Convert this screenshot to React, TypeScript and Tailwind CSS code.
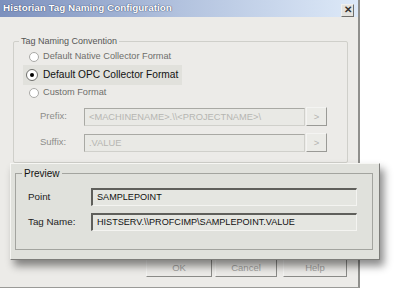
import React from 'react';

const font = { fontFamily: '"Liberation Sans", Arial, sans-serif' };

const Radio: React.FC<{ checked?: boolean; big?: boolean }> = ({ checked, big }) => (
  <span
    className={`inline-flex shrink-0 items-center justify-center rounded-full border bg-white ${
      big ? 'w-[12px] h-[12px] border-[#6f6f6c]' : 'w-[10px] h-[10px] border-[#a9a9a6]'
    }`}
  >
    {checked && <span className="w-[4px] h-[4px] rounded-full bg-black" />}
  </span>
);

const PathRow: React.FC<{ label: string; value: string }> = ({ label, value }) => (
  <div className="flex items-center">
    <span className="w-[44px] text-[9.5px] text-[#8d8d8a]">{label}</span>
    <div className="w-[221px] h-[18px] border border-[#d0d0cb] border-t-[#a9a9a4] border-l-[#a9a9a4] bg-[#e9e9e5] pl-[4px] text-[9.3px] leading-[16px] text-[#b6b6b2] overflow-hidden whitespace-nowrap">
      {value}
    </div>
    <div className="ml-[1px] w-[21px] h-[19px] border border-[#f4f4f2] border-r-[#9a9a96] border-b-[#9a9a96] bg-[#ebebe7] text-[9.5px] leading-[17px] text-center text-[#b4b4b0]">
      &gt;
    </div>
  </div>
);

const Field: React.FC<{ label: string; value: string }> = ({ label, value }) => (
  <div className="flex items-center">
    <span className="w-[63px] text-[9.8px] text-[#222]">{label}</span>
    <div className="w-[266px] h-[18px] border border-[#f4f4f1] border-t-2 border-l-2 border-t-[#5f5f5b] border-l-[#5f5f5b] bg-[#e5e6e1] pl-[4px] text-[9.1px] leading-[15px] text-[#111] whitespace-nowrap overflow-hidden">
      {value}
    </div>
  </div>
);

const App: React.FC = () => {
  return (
    <div className="w-[394px] h-[290px] bg-white overflow-hidden" style={font}>
      <div className="relative w-[360px] h-[288px] bg-[#ecebe8] border-r-2 border-b border-r-[#8f8f8c] border-b-[#9a9a97]">
        {/* Title bar */}
        <div className="h-[17px] flex items-center justify-between pl-[3px] pr-[4px] bg-gradient-to-r from-[#7c90bd] via-[#b2c2de] to-[#dde9f8]">
          <span className="text-[9.9px] font-bold text-white [text-shadow:0_0_1px_#3a4a70,0_0_1px_#3a4a70]">
            Historian Tag Naming Configuration
          </span>
          <span className="w-[13px] h-[13px] mt-[3px] flex items-center justify-center border border-[#f0f0ee] border-r-[#6f6f6c] border-b-[#6f6f6c] bg-[#e4e3df] text-[10px] font-bold leading-none text-[#333]">
            ✕
          </span>
        </div>

        {/* Tag Naming Convention group */}
        <div className="pt-[18px] pl-[13px]">
          <fieldset className="w-[335px] h-[128px] border border-[#cfcfca] rounded-[2px] pl-[15px]">
            <legend className="ml-[-10px] px-[2px] text-[9px] leading-[12px] text-[#555]">Tag Naming Convention</legend>
            <div className="flex items-center gap-[4px] mt-[4px] h-[11px] text-[9.2px] text-[#6e6e6b]">
              <Radio />
              <span>Default Native Collector Format</span>
            </div>
            <div className="flex items-center gap-[5px] ml-[-6px] mt-[3px] w-[159px] h-[20px] pl-[3px] bg-[#e1e1dc] text-[10.2px] text-[#111]">
              <Radio checked big />
              <span>Default OPC Collector Format</span>
            </div>
            <div className="flex items-center gap-[4px] mt-[2px] h-[11px] text-[9.2px] text-[#6e6e6b]">
              <Radio />
              <span>Custom Format</span>
            </div>
            <div className="flex flex-col gap-[7px] mt-[9px] pl-[11px]">
              <PathRow label="Prefix:" value="<MACHINENAME>.\\<PROJECTNAME>\" />
              <PathRow label="Suffix:" value=".VALUE" />
            </div>
          </fieldset>
        </div>

        {/* Buttons behind the preview */}
        <div className="absolute left-[146px] top-[256px] flex gap-[3px]">
          {['OK', 'Cancel', 'Help'].map((b, i) => (
            <div
              key={b}
              className={`${i === 2 ? 'ml-[3px] w-[64px]' : i === 1 ? 'w-[62px]' : 'w-[66px]'} h-[21px] border border-[#f4f4f2] border-r-[#8a8a87] border-b-[#8a8a87] bg-[#ecebe8] text-[9.5px] leading-[22px] text-center text-[#a2a29f]`}
            >
              {b}
            </div>
          ))}
        </div>

        {/* Magnified preview overlay */}
        <div className="absolute left-[10px] top-[163px] w-[370px] h-[97px] bg-[#e0e1dc] border border-[#f6f6f3] border-r-[#7d7d7a] border-b-[#7d7d7a] shadow-[4px_6px_8px_rgba(0,0,0,0.45)] px-[4px] pt-[3px]">
          <fieldset className="w-[358px] h-[83px] border border-[#a3a49f] pl-[12px]">
            <legend className="ml-[-6px] px-[2px] text-[10px] leading-[13px] text-[#111]">Preview</legend>
            <div className="flex flex-col gap-[7px] mt-[8px]">
              <Field label="Point" value="SAMPLEPOINT" />
              <Field label="Tag Name:" value="HISTSERV.\\PROFCIMP\SAMPLEPOINT.VALUE" />
            </div>
          </fieldset>
        </div>
      </div>
    </div>
  );
};

export default App;
